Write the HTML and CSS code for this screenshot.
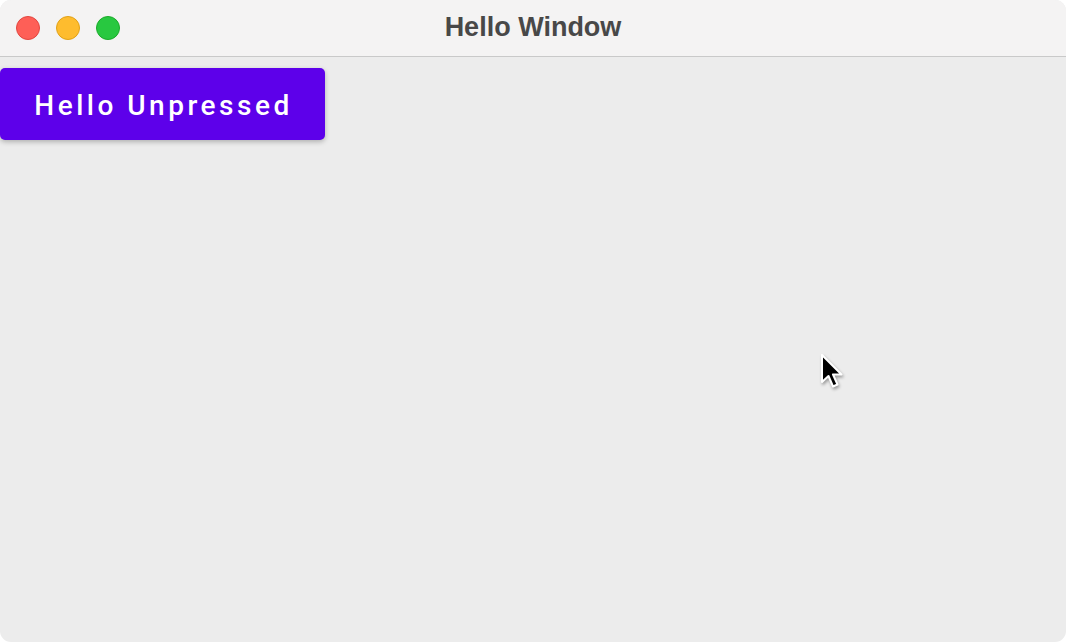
FILE: index.html
```html
<!DOCTYPE html>
<html lang="en">
<head>
    <meta charset="UTF-8">
    <meta name="viewport" content="width=device-width, initial-scale=1.0">
    <title>Hello Window</title>
    <link rel="stylesheet" href="styles.css">
</head>
<body>
	<div class="window">
		<div class="titlebar">
			<div class="lights">
				<span class="light red"></span>
				<span class="light yellow"></span>
				<span class="light green"></span>
			</div>
			<div class="title">Hello Window</div>
		</div>
		<div class="content">
			<button type="button" class="hello">Hello Unpressed</button>
		</div>
		<svg class="cursor" width="26" height="40" viewBox="0 0 26 40">
			<path d="M2 2 L2 29 L8.5 23 L13 33.5 L17.5 31.5 L13 21.5 L21.5 21.5 Z" fill="#000" stroke="#fff" stroke-width="2" stroke-linejoin="round"/>
		</svg>
	</div>
</body>
</html>
```

FILE: styles.css
```css
html, body {
  margin: 0;
  padding: 0;
  background: #fff;
}
.window {
  position: relative;
  width: 1066px;
  height: 642px;
  border-radius: 11px;
  overflow: hidden;
  background: #ececec;
  display: flex;
  flex-direction: column;
}
.titlebar {
  height: 56px;
  background: #f4f3f3;
  border-bottom: 1px solid #c9c9c9;
  display: flex;
  align-items: center;
  position: relative;
}
.lights {
  display: flex;
  gap: 16px;
  padding-left: 16px;
}
.light {
  width: 24px;
  height: 24px;
  border-radius: 50%;
  box-sizing: border-box;
}
.red {
  background: #fe5f57;
  border: 1px solid #e2463f;
}
.yellow {
  background: #febc2e;
  border: 1px solid #e1a116;
}
.green {
  background: #28c840;
  border: 1px solid #1aab29;
}
.title {
  flex: 1;
  text-align: center;
  margin-left: -120px;
  margin-top: -2px;
  font-family: "Liberation Sans", Arial, sans-serif;
  font-weight: bold;
  font-size: 27px;
  color: #484848;
}
.content {
  flex: 1;
  padding-top: 11px;
}
.hello {
  width: 325px;
  height: 72px;
  background: #5d00ea;
  color: #fff;
  border: 0;
  border-radius: 5px;
  font-family: Roboto, "Liberation Sans", sans-serif;
  font-weight: 500;
  font-size: 28px;
  letter-spacing: 3.5px;
  box-shadow: 0 2px 5px rgba(0, 0, 0, 0.25);
  padding: 2px 0 0 2px;
}
.cursor {
  position: absolute;
  left: 820px;
  top: 353px;
  filter: drop-shadow(1px 2px 1.5px rgba(0, 0, 0, 0.35));
}
```
